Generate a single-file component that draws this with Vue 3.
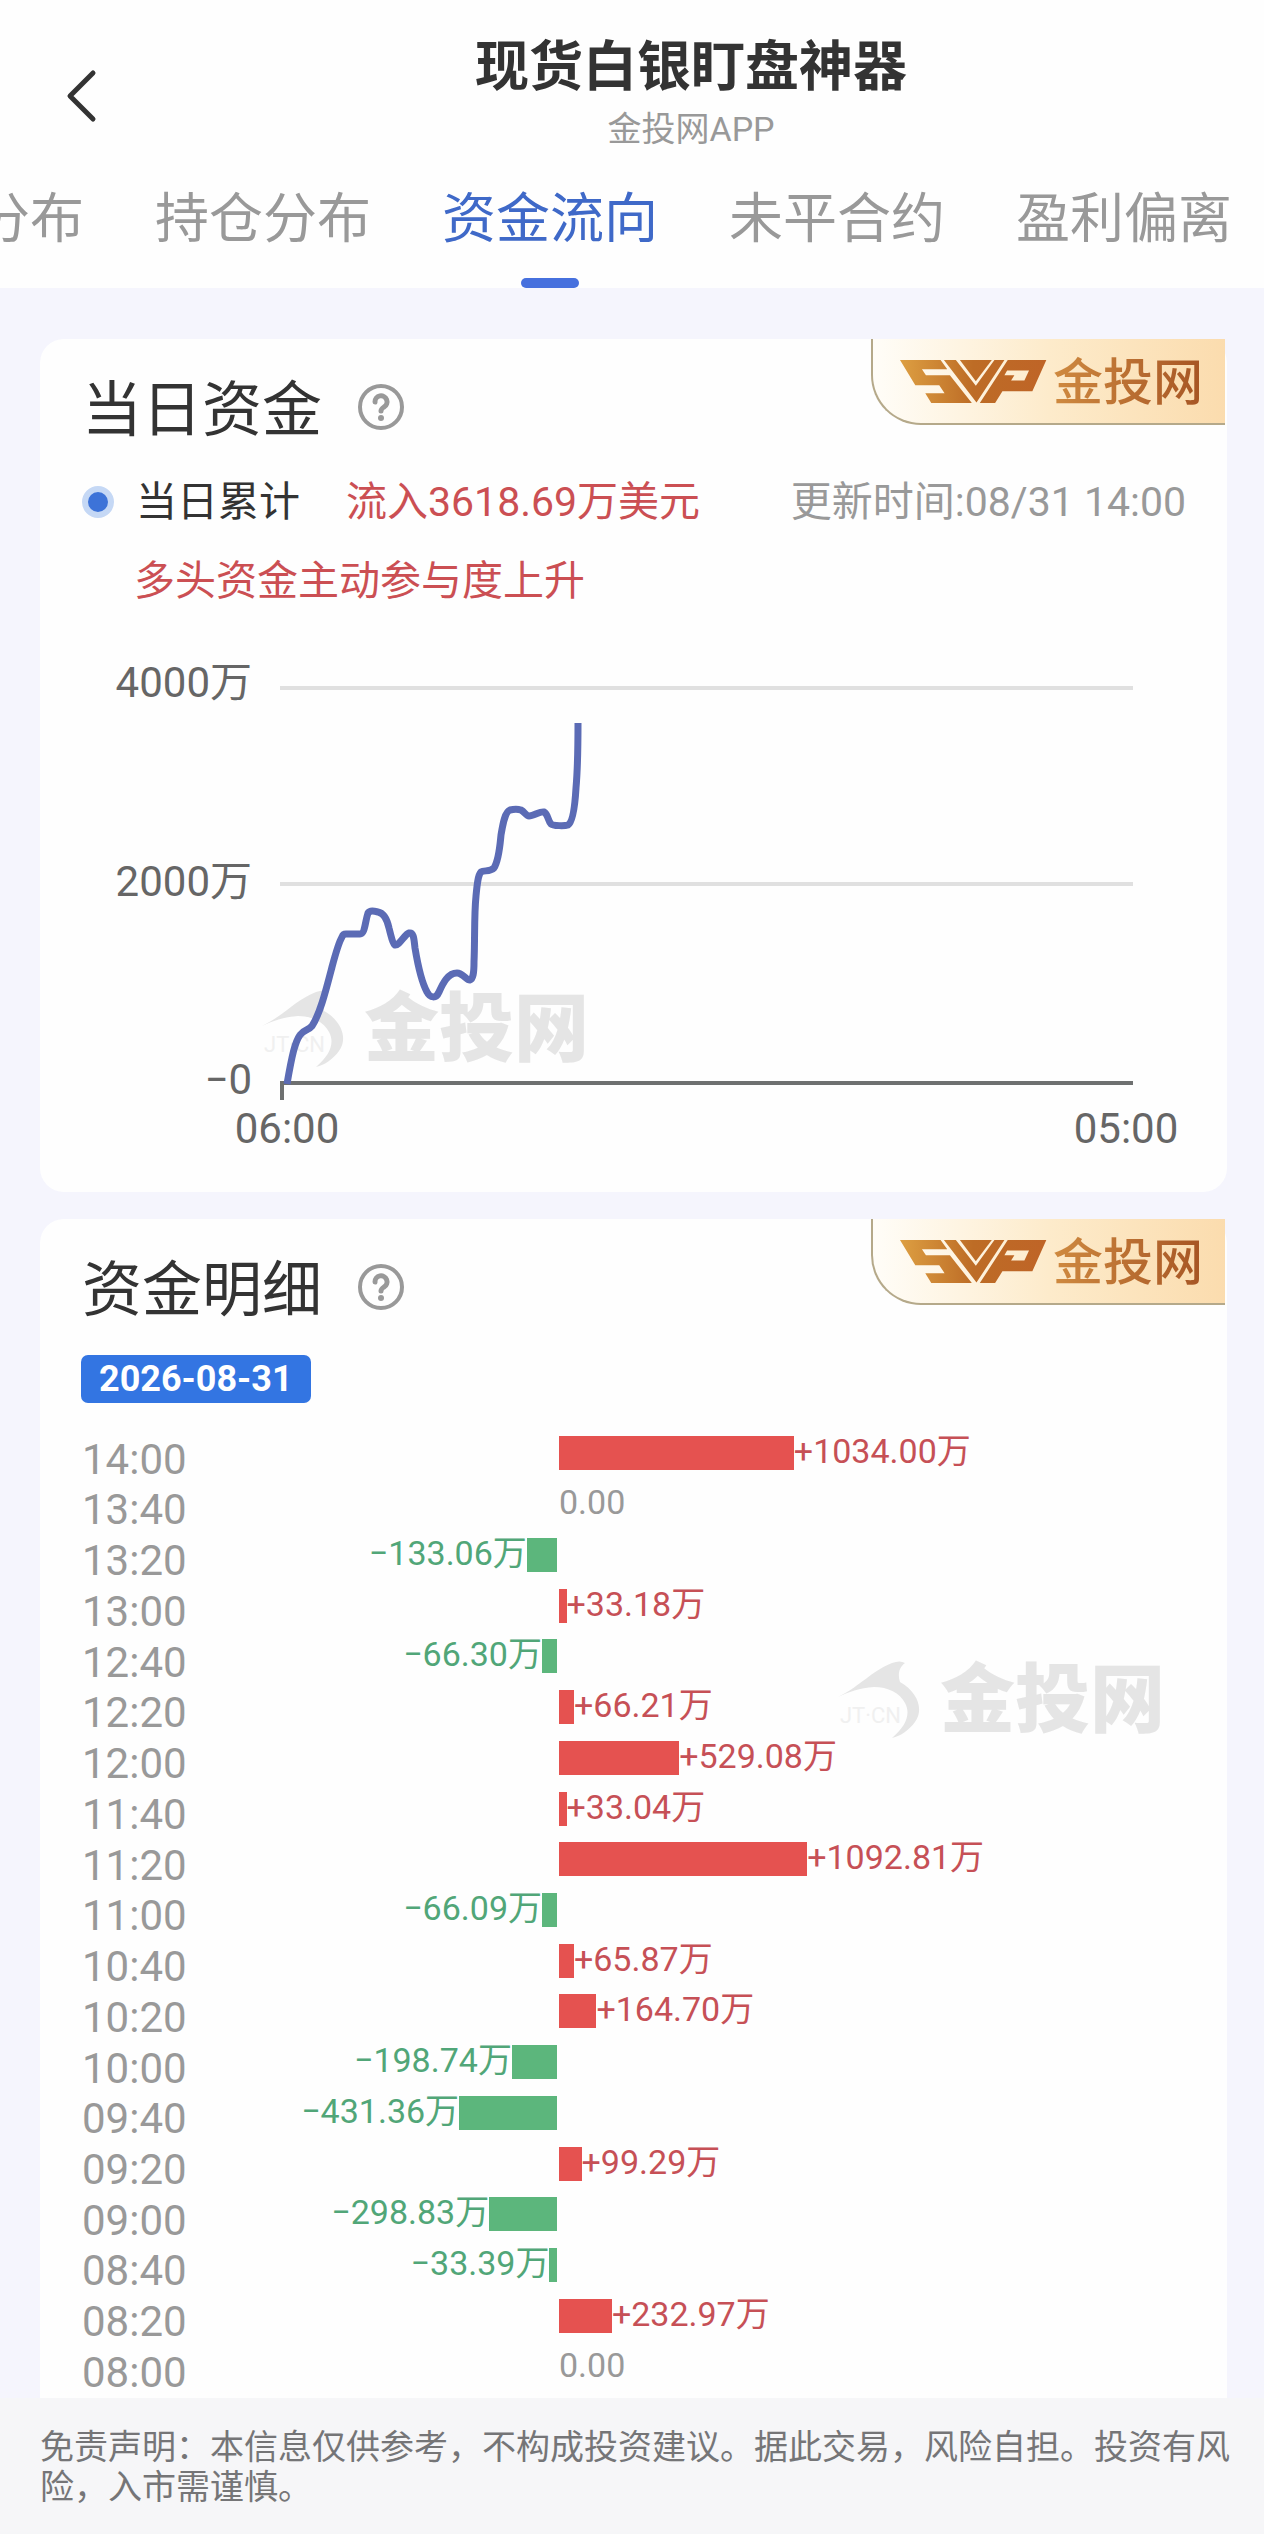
<script setup>
import { ref } from 'vue'

const tabs = ['成交分布', '持仓分布', '资金流向', '未平合约', '盈利偏离']
const activeTab = ref('资金流向')

// 纵轴网格：标签 + 线的位置
const grid = [
  { label: '4000万', y: 48, textY: 57 },
  { label: '2000万', y: 244, textY: 256 },
]

// 单位：万
const flows = [
  { time: '14:00', value: 1034.0 },
  { time: '13:40', value: 0 },
  { time: '13:20', value: -133.06 },
  { time: '13:00', value: 33.18 },
  { time: '12:40', value: -66.3 },
  { time: '12:20', value: 66.21 },
  { time: '12:00', value: 529.08 },
  { time: '11:40', value: 33.04 },
  { time: '11:20', value: 1092.81 },
  { time: '11:00', value: -66.09 },
  { time: '10:40', value: 65.87 },
  { time: '10:20', value: 164.7 },
  { time: '10:00', value: -198.74 },
  { time: '09:40', value: -431.36 },
  { time: '09:20', value: 99.29 },
  { time: '09:00', value: -298.83 },
  { time: '08:40', value: -33.39 },
  { time: '08:20', value: 232.97 },
  { time: '08:00', value: 0 },
]

// 左右两侧轨道各自的满刻度
const MAX_OUT = 1604
const MAX_IN = 2765

function barWidth(value) {
  const max = value < 0 ? MAX_OUT : MAX_IN
  return (Math.abs(value) / max) * 100 + '%'
}

function label(value) {
  if (value === 0) return '0.00'
  return (value > 0 ? '+' : '−') + Math.abs(value).toFixed(2) + '万'
}
</script>

<template>
  <div class="page">
    <header class="header">
      <div class="nav">
        <button type="button" class="back" aria-label="返回">
          <svg class="back-icon" viewBox="0 0 32 54" aria-hidden="true">
            <path d="M28 4 5 27l23 23" fill="none" stroke="#333" stroke-width="5" stroke-linecap="round" stroke-linejoin="round" />
          </svg>
        </button>
        <div class="nav-text">
          <h1 class="nav-title">现货白银盯盘神器</h1>
          <p class="nav-sub">金投网APP</p>
        </div>
      </div>
      <nav class="tabs">
        <button
          v-for="tab in tabs"
          :key="tab"
          type="button"
          class="tab"
          :class="{ 'is-active': tab === activeTab }"
          @click="activeTab = tab"
        >
          {{ tab }}
        </button>
      </nav>
    </header>

    <!-- 公用图形 -->
    <svg class="defs" aria-hidden="true">
      <defs>
        <linearGradient id="gold" gradientUnits="userSpaceOnUse" x1="18" y1="0" x2="458" y2="0">
          <stop offset="0" stop-color="#dd9f42" />
          <stop offset="0.5" stop-color="#bd6c26" />
          <stop offset="1" stop-color="#bf6427" />
        </linearGradient>
        <symbol id="help" viewBox="0 0 46 46">
          <circle cx="23" cy="23" r="21" fill="none" stroke="#999" stroke-width="4" />
          <path d="M17 18a6 6 0 1 1 9 5q-3 2-3 4" fill="none" stroke="#999" stroke-width="5" stroke-linecap="round" />
          <circle cx="23" cy="34" r="3" fill="#999" />
        </symbol>
        <symbol id="svp" viewBox="15 26 445 134">
          <g fill="url(#gold)" fill-rule="evenodd">
            <path d="M18 28H140L160 56H84L96 74H168L234 158H112L94 128H152L136 104H64Z" />
            <path d="M150 28H186L246 106 302 28H332L248 156Z" />
            <path d="M198 28H294L246 92Z" />
            <path d="M342 28H458L416 122H326L304 158H258ZM340 60 332 74H362L352 90H392L406 60Z" />
          </g>
        </symbol>
        <symbol id="dolphin" viewBox="0 0 84 80">
          <path
            d="M0 37C24 25 32 12 54 3Q62 0 67 3C60 8 60 16 62 22C80 32 86 50 77 62C71 70 63 76 54 78C68 66 73 54 67 43C62 33 50 27 36 27C22 28 10 32 0 37Z"
            fill="#e5e5e5"
          />
        </symbol>
      </defs>
    </svg>

    <main class="content">
      <section class="card">
        <div class="brand">
          <svg class="brand-logo" role="img" aria-label="SVP"><use href="#svp" /></svg>
          <span class="brand-name">金投网</span>
        </div>
        <div class="card-head">
          <h2 class="card-title">当日资金</h2>
          <button type="button" class="help" aria-label="说明">
            <svg class="help-icon"><use href="#help" /></svg>
          </button>
        </div>
        <div class="summary">
          <span class="dot"></span>
          <span>当日累计</span>
          <span class="inflow">流入3618.69万美元</span>
          <span class="updated">更新时间:08/31 14:00</span>
        </div>
        <p class="remark">多头资金主动参与度上升</p>

        <div class="chart">
          <div class="watermark watermark-line">
            <span class="watermark-mark">
              <svg class="dolphin"><use href="#dolphin" /></svg>
              <span class="watermark-code">JT·CN</span>
            </span>
            <span>金投网</span>
          </div>
          <svg class="chart-svg" viewBox="0 0 1187 552" role="img" aria-label="当日资金走势">
            <g v-for="g in grid" :key="g.label">
              <line x1="240" :y1="g.y" x2="1093" :y2="g.y" stroke="#e0e0e0" stroke-width="4" />
              <text x="212" :y="g.textY" text-anchor="end">{{ g.label }}</text>
            </g>
            <text x="212" y="454" text-anchor="end">−0</text>
            <path d="M240 443H1093M242 443V460" fill="none" stroke="#6e7070" stroke-width="4" />
            <text x="247" y="503" text-anchor="middle">06:00</text>
            <text x="1086" y="503" text-anchor="middle">05:00</text>
            <path
              d="M247 444C252 415 255 402 260 395C264 389 268 391 272 386C280 374 286 350 292 327C296 312 299 302 302 297Q303 294 306 294L320 294C325 294 325 282 328 273C330 270 334 271 338 272C344 273 347 279 349 288C351 296 353 304 355 305C359 306 365 294 369 293C374 292 374 300 375 308C378 326 382 343 387 352C390 358 396 359 399 352C403 343 408 333 417 333C423 333 427 341 430 340C433 339 434 333 434 322C435 300 434 276 436 256C437 245 438 235 441 232C444 230 450 232 454 228C459 220 460 205 461 195C463 183 465 172 470 170C474 169 478 169 481 170C485 172 486 176 489 176C494 176 500 171 504 172C508 174 508 181 511 184C513 186 525 186 528 185C533 182 535 165 536 148C538 125 538 104 538 83"
              fill="none"
              stroke="#5b6bb5"
              stroke-width="7"
              stroke-linejoin="round"
            />
          </svg>
        </div>
      </section>

      <section class="card card-detail">
        <div class="brand">
          <svg class="brand-logo" role="img" aria-label="SVP"><use href="#svp" /></svg>
          <span class="brand-name">金投网</span>
        </div>
        <div class="card-head">
          <h2 class="card-title">资金明细</h2>
          <button type="button" class="help" aria-label="说明">
            <svg class="help-icon"><use href="#help" /></svg>
          </button>
        </div>
        <time class="date">2026-08-31</time>

        <div class="watermark watermark-detail">
          <span class="watermark-mark">
            <svg class="dolphin"><use href="#dolphin" /></svg>
            <span class="watermark-code">JT·CN</span>
          </span>
          <span>金投网</span>
        </div>
        <ul class="flows">
          <li v-for="item in flows" :key="item.time" class="flow">
            <span class="flow-time">{{ item.time }}</span>
            <div class="track track-out">
              <template v-if="item.value < 0">
                <span class="flow-value">{{ label(item.value) }}</span>
                <i class="bar" :style="{ width: barWidth(item.value) }"></i>
              </template>
            </div>
            <div class="track track-in" :class="{ 'is-zero': item.value === 0 }">
              <template v-if="item.value >= 0">
                <i class="bar" :style="{ width: barWidth(item.value) }"></i>
                <span class="flow-value">{{ label(item.value) }}</span>
              </template>
            </div>
          </li>
        </ul>
      </section>
    </main>

    <footer class="footer">
      免责声明：本信息仅供参考，不构成投资建议。据此交易，风险自担。投资有风险，入市需谨慎。
    </footer>
  </div>
</template>

<style>
body {
  margin: 0;
  background: #f5f5fd;
}
</style>

<style scoped>
.page {
  display: flex;
  flex-direction: column;
  min-height: 100vh;
  overflow: hidden;
  font-family: Roboto, 'Noto Sans CJK SC', sans-serif;
  font-size: 41px;
  color: #333;
  background: #f5f5fd;
}

button {
  padding: 0;
  font: inherit;
  color: inherit;
  background: none;
  border: none;
  cursor: pointer;
}

.defs {
  position: absolute;
  width: 0;
  height: 0;
}

.header {
  background: #fefefe;
}

.nav {
  display: flex;
  min-height: 192px;
}

.back {
  width: 118px;
  padding-left: 44px;
}

.back-icon {
  display: block;
  width: 32px;
  height: 54px;
  margin-left: 21px;
}

.nav-text {
  flex: 1;
  padding-top: 36px;
  text-align: center;
}

.nav-title {
  margin: 0;
  font-size: 54px;
  line-height: 64px;
  font-weight: 700;
}

.nav-sub {
  margin: 9px 0 0;
  font-size: 34px;
  line-height: 40px;
  color: #999;
}

.tabs {
  display: flex;
  gap: 71px;
  margin-left: -132px;
}

.tab {
  display: flex;
  flex: none;
  flex-direction: column;
  align-items: center;
  gap: 30px;
  font-size: 54px;
  line-height: 56px;
  color: #999;
}

.tab::after {
  content: '';
  width: 58px;
  height: 10px;
  border-radius: 5px;
}

.tab.is-active {
  color: #3f69c8;
}

.tab.is-active::after {
  background: #4670de;
}

.content {
  display: flex;
  flex-direction: column;
  gap: 27px;
  padding: 51px 37px 0 40px;
}

.card {
  position: relative;
  padding-top: 28px;
  background: #fefefe;
  border-radius: 24px;
}

.card-detail {
  padding-bottom: 6px;
  border-radius: 24px 24px 0 0;
}

.brand {
  position: absolute;
  top: 0;
  right: 2px;
  display: flex;
  align-items: center;
  gap: 6px;
  height: 84px;
  padding: 0 22px 0 26px;
  border-left: 2px solid #b5a98a;
  border-bottom: 2px solid #b5a98a;
  border-radius: 0 0 0 50px;
  background: linear-gradient(90deg, #fffdf8, #fdebcb 50%, #fbdcae);
}

.brand-logo {
  width: 148px;
  height: 45px;
}

.brand-name {
  padding-top: 4px;
  font-size: 50px;
  line-height: 60px;
  font-weight: 500;
  color: transparent;
  background: linear-gradient(90deg, #cf8a40, #a65524);
  background-clip: text;
}

.card-head {
  display: flex;
  align-items: center;
  gap: 36px;
  padding-left: 42px;
}

.card-title {
  margin: 0;
  padding-top: 8px;
  font-size: 60px;
  line-height: 72px;
  font-weight: 400;
}

.help-icon {
  display: block;
  width: 46px;
  height: 46px;
}

.summary {
  display: flex;
  align-items: center;
  margin-top: 31px;
  padding: 0 41px 0 42px;
  line-height: 48px;
}

.dot {
  box-sizing: border-box;
  width: 32px;
  height: 32px;
  margin-right: 22px;
  border: 6px solid #c5d8f5;
  border-radius: 50%;
  background: #3d73d8;
}

.inflow {
  margin-left: 46px;
  color: #cb4f53;
}

.updated {
  margin-left: auto;
  color: #999;
}

.remark {
  margin: 31px 0 35px;
  padding-left: 94px;
  line-height: 48px;
  color: #cb4f53;
}

.chart {
  position: relative;
}

.chart-svg {
  position: relative;
  display: block;
  width: 100%;
  fill: #666;
  font-size: 42px;
}

.watermark {
  position: absolute;
  display: flex;
  align-items: center;
  gap: 18px;
  font-size: 75px;
  line-height: 80px;
  font-weight: 900;
  color: #e5e5e5;
}

.watermark-line {
  top: 349px;
  left: 222px;
}

.watermark-detail {
  top: 441px;
  right: 62px;
}

.watermark-mark {
  position: relative;
  height: 80px;
}

.watermark-code {
  position: absolute;
  top: 44px;
  left: 2px;
  font-size: 22px;
  line-height: 24px;
  font-weight: 400;
  color: #f0f0f0;
}

.dolphin {
  display: block;
  width: 84px;
  height: 80px;
}

.date {
  display: inline-block;
  margin: 28px 0 0 41px;
  padding: 0 18px;
  border-radius: 7px;
  font-size: 36px;
  line-height: 48px;
  font-weight: 700;
  color: #fff;
  background: #3375e2;
  vertical-align: top;
}

.flows {
  position: relative;
  display: flex;
  flex-direction: column;
  min-height: 964px;
  margin: 25px 40px 0 42px;
  padding: 0;
  list-style: none;
}

.flow {
  display: grid;
  grid-template-columns: 111px 365fr 629fr;
  flex: 1;
}

.flow-time {
  align-self: end;
  font-size: 42px;
  line-height: 38px;
  color: #999;
}

.track {
  display: flex;
  align-items: center;
  font-size: 34px;
  line-height: 40px;
  white-space: nowrap;
}

.track-out {
  justify-content: flex-end;
  padding-right: 1px;
  color: #51a678;
}

.track-in {
  padding-left: 1px;
  color: #c65056;
}

.track-in.is-zero {
  color: #999;
}

.flow-value {
  padding-bottom: 4px;
}

.bar {
  flex: none;
  height: 34px;
}

.track-out .bar {
  background: #5cb67c;
}

.track-in .bar {
  background: #e55250;
}

.footer {
  flex: 1;
  padding: 29px 32px 27px 40px;
  font-size: 34px;
  line-height: 40px;
  color: #757577;
  background: #f6f6f8;
}
</style>
